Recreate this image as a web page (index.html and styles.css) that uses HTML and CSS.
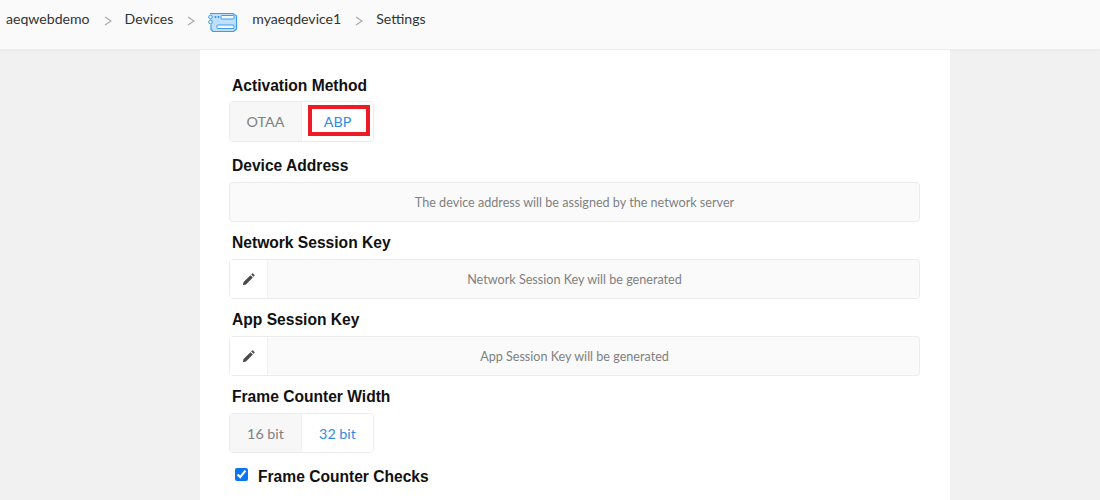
FILE: index.html
```html
<!DOCTYPE html>
<html lang="en">
<head>
<meta charset="utf-8">
<title>Settings</title>
<link rel="stylesheet" href="styles.css">
</head>
<body>
<header class="crumbs">
  <span>aeqwebdemo</span>
  <svg class="chev" viewBox="0 0 8 10"><path d="M1 1l6 4-6 4" /></svg>
  <span>Devices</span>
  <svg class="chev" viewBox="0 0 8 10"><path d="M1 1l6 4-6 4" /></svg>
  <svg class="device" viewBox="0 0 30 20">
    <path class="dev-body" d="M2 1.500h23l3.500 2.500v13l-3 2.500H5l-2-2v-5H1.500v-5H2z"/>
    <path class="dev-line" d="M2 1.500h23l3.500 2.500v13l-3 2.500H5l-2-2v-5"/>
    <rect class="dev-slot" x="13" y="3.500" width="13" height="3.500" rx=".8"/>
    <rect class="dev-slot" x="9" y="13" width="17" height="3.500" rx=".8"/>
    <circle class="dev-dot" cx="7.500" cy="5" r="1"/>
    <circle class="dev-dot" cx="10.500" cy="5" r="1"/>
    <circle class="dev-pin" cx="2.500" cy="5" r="1.800"/>
    <circle class="dev-pin" cx="2.500" cy="10" r="1.800"/>
  </svg>
  <span>myaeqdevice1</span>
  <svg class="chev" viewBox="0 0 8 10"><path d="M1 1l6 4-6 4" /></svg>
  <span>Settings</span>
</header>
<main class="panel">
  <h2 class="label first">Activation Method</h2>
  <div class="toggle">
    <span class="opt off">OTAA</span>
    <span class="opt on">ABP<span class="mark"></span></span>
  </div>
  <h2 class="label">Device Address</h2>
  <div class="field">The device address will be assigned by the network server</div>
  <h2 class="label">Network Session Key</h2>
  <div class="field split">
    <span class="edit"><svg viewBox="0 0 14 14"><path d="M.8 13.200l.9-3.500 7.400-7.400 2.600 2.600-7.400 7.400zM9.900 1.500l.9-.9a.8.800 0 0 1 1.100 0l1.500 1.500a.8.800 0 0 1 0 1.100l-.9.900z"/></svg></span>
    <span class="hint">Network Session Key will be generated</span>
  </div>
  <h2 class="label">App Session Key</h2>
  <div class="field split">
    <span class="edit"><svg viewBox="0 0 14 14"><path d="M.8 13.200l.9-3.500 7.400-7.400 2.600 2.600-7.400 7.400zM9.900 1.500l.9-.9a.8.800 0 0 1 1.100 0l1.500 1.500a.8.800 0 0 1 0 1.100l-.9.900z"/></svg></span>
    <span class="hint">App Session Key will be generated</span>
  </div>
  <h2 class="label">Frame Counter Width</h2>
  <div class="toggle wide">
    <span class="opt off">16 bit</span>
    <span class="opt on">32 bit</span>
  </div>
  <label class="check">
    <input type="checkbox" checked>
    <span>Frame Counter Checks</span>
  </label>
</main>
</body>
</html>
```
FILE: styles.css
```css
* { box-sizing: border-box; }
html, body { height: 100%; }
body {
  margin: 0;
  height: 500px;
  overflow: hidden;
  background: #f1f1f1;
  font-family: Lato, sans-serif;
  color: #333;
}
.crumbs {
  height: 50px;
  background: #fafafa;
  border-bottom: 1px solid #ececec;
  box-shadow: 0 1px 2px rgba(0,0,0,.03);
  display: flex;
  align-items: flex-start;
  padding: 10px 0 0 6px;
  font-size: 14.100px;
  line-height: 18px;
  color: #333;
}
.chev {
  width: 8px;
  height: 10px;
  margin: 6px 13px 0 14px;
  flex: none;
}
.chev path { fill: none; stroke: #a8a8a8; stroke-width: 1.200; }
.device { width: 30px; height: 20px; margin: 2px 14px 0 0; flex: none; }
.dev-body { fill: #bfe0fb; }
.dev-line { fill: none; stroke: #3f9bec; stroke-width: 1.200; }
.dev-slot { fill: #f2f9ff; stroke: #3f9bec; stroke-width: 1; }
.dev-dot { fill: #2f8fe6; }
.dev-pin { fill: #dff0ff; stroke: #3f9bec; stroke-width: 1; }
.panel {
  width: 750px;
  height: 450px;
  margin-left: 200px;
  background: #fff;
  padding: 26px 30px 0 29px;
}
.label {
  margin: 11px 0 6px 3px;
  font: bold 15.600px/20px "Liberation Sans", Arial, sans-serif;
  color: #111;
}
.label.first { margin: 0 0 5px 3px; }
.toggle {
  display: flex;
  width: 145px;
  height: 41px;
  margin-bottom: 14px;
  border: 1px solid #ececec;
  border-radius: 4px;
  overflow: hidden;
  font-size: 14.300px;
}
.toggle.wide { height: 40px; }
.opt {
  display: flex;
  align-items: center;
  justify-content: center;
  flex: 1;
  position: relative;
}
.off {
  flex: none;
  width: 72px;
  background: #f7f7f7;
  color: #808080;
  border-right: 1px solid #f0f0f0;
}
.on { color: #2f8be0; background: #fff; }
.mark {
  position: absolute;
  left: 6px;
  top: 3px;
  width: 62px;
  height: 31px;
  border: 4px solid #ed1c24;
}
.field {
  height: 40px;
  border: 1px solid #ebebeb;
  border-radius: 4px;
  background: #fafafa;
  display: flex;
  align-items: center;
  justify-content: center;
  font-size: 12.600px;
  color: #808080;
}
.split { justify-content: flex-start; }
.edit {
  width: 38px;
  height: 100%;
  flex: none;
  background: #fff;
  border-right: 1px solid #efefef;
  display: flex;
  align-items: center;
  justify-content: center;
}
.edit svg { width: 13px; height: 13px; }
.edit path { fill: #4a4a4a; }
.hint { flex: 1; text-align: center; padding-right: 38px; }
.check {
  display: flex;
  align-items: center;
  margin: 0 0 0 6px;
  font: bold 15.600px/20px "Liberation Sans", Arial, sans-serif;
  color: #111;
}
.check input {
  width: 13px;
  height: 13px;
  margin: 0 10px 5px 0;
  accent-color: #0b76ef;
}
```
